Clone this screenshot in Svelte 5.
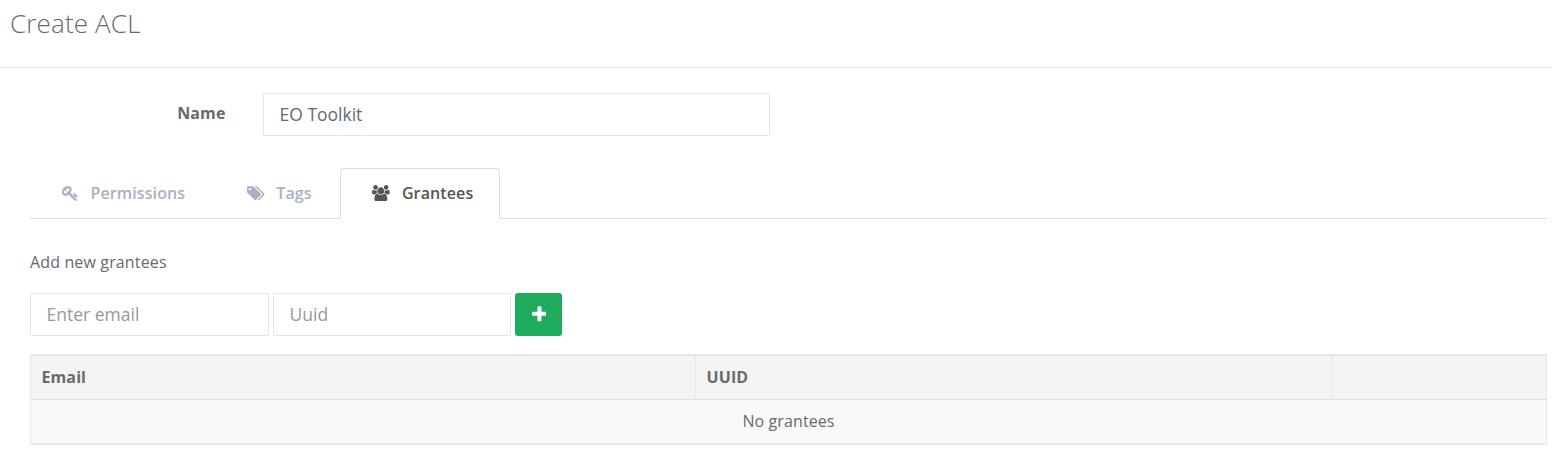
<script>
  const tabs = [
    { id: 'permissions', label: 'Permissions' },
    { id: 'tags', label: 'Tags' },
    { id: 'grantees', label: 'Grantees' }
  ];

  // Font Awesome 4 outlines, drawn on a flipped 1792 grid
  const icons = {
    permissions: { width: 1792, d: 'M832 1024q0 80 -56 136t-136 56t-136 -56t-56 -136q0 -42 19 -83q-41 19 -83 19q-80 0 -136 -56t-56 -136t56 -136t136 -56t136 56t56 136q0 42 -19 83q41 -19 83 -19q80 0 136 56t56 136zM1683 320q0 -17 -49 -66t-66 -49q-9 0 -28.500 16t-36.500 33t-38.500 40t-24.500 26l-96 -96l220 -220q28 -28 28 -68q0 -42 -39 -81t-81 -39q-40 0 -68 28l-671 671q-176 -131 -365 -131q-163 0 -265.500 102.500t-102.500 265.500q0 160 95 313t248 248t313 95q163 0 265.500 -102.500t102.500 -265.500q0 -189 -131 -365l355 -355l96 96q-3 3 -26 24.500t-40 38.500t-33 36.500t-16 28.500q0 17 49 66t66 49q13 0 23 -10q6 -6 46 -44.500t82 -79.500t86.500 -86t73 -78t28.500 -41z' },
    tags: { width: 1920, d: 'M448 1088q0 53 -37.500 90.500t-90.500 37.500t-90.500 -37.500t-37.500 -90.500t37.500 -90.500t90.500 -37.500t90.500 37.500t37.500 90.500zM1515 512q0 -53 -37 -90l-491 -492q-39 -37 -91 -37q-53 0 -90 37l-715 716q-38 37 -64.500 101t-26.500 117v416q0 52 38 90t90 38h416q53 0 117 -26.500t102 -64.500l715 -714q37 -39 37 -91zM1899 512q0 -53 -37 -90l-491 -492q-39 -37 -91 -37q-36 0 -59 14t-53 45l470 470q37 37 37 90q0 52 -37 91l-715 714q-38 38 -102 64.500t-117 26.500h224q53 0 117 -26.500t102 -64.500l715 -714q37 -39 37 -91z' },
    grantees: { width: 1920, d: 'M593 640q-162 -5 -265 -128h-134q-82 0 -138 40.500t-56 118.500q0 353 124 353q6 0 43.500 -21t97.500 -42.500t119 -21.500q67 0 133 23q-5 -37 -5 -66q0 -139 81 -256zM1664 3q0 -120 -73 -189.500t-194 -69.500h-874q-121 0 -194 69.500t-73 189.500q0 53 3.500 103.500t14 109t26.500 108.500t43 97.500t62 81t85.500 53.500t111.500 20q10 0 43 -21.500t73 -48t107 -48t135 -21.500t135 21.500t107 48t73 48t43 21.500q61 0 111.500 -20t85.500 -53.500t62 -81t43 -97.500t26.500 -108.500t14 -109t3.500 -103.500zM640 1280q0 -106 -75 -181t-181 -75t-181 75t-75 181t75 181t181 75t181 -75t75 -181zM1344 896q0 -159 -112.500 -271.500t-271.500 -112.500t-271.500 112.500t-112.500 271.500t112.500 271.500t271.500 112.500t271.500 -112.500t112.500 -271.500zM1920 671q0 -78 -56 -118.500t-138 -40.500h-134q-103 123 -265 128q81 117 81 256q0 29 -5 66q66 -23 133 -23q59 0 119 21.500t97.500 42.500t43.500 21q124 0 124 -353zM1792 1280q0 -106 -75 -181t-181 -75t-181 75t-75 181t75 181t181 75t181 -75t75 -181z' }
  };

  let activeTab = 'grantees';
  let name = 'EO Toolkit';
  let email = '';
  let uuid = '';
  let grantees = [];

  function addGrantee() {
    if (!email && !uuid) return;
    grantees = [...grantees, { email, uuid }];
    email = '';
    uuid = '';
  }
</script>

<header>
  <h1>Create ACL</h1>
</header>

<main>
  <div class="form-group">
    <label for="name">Name</label>
    <input id="name" class="name" type="text" bind:value={name} />
  </div>

  <ul class="tabs">
    {#each tabs as tab}
      <li>
        <button class="tab {tab.id}" class:active={activeTab === tab.id} on:click={() => (activeTab = tab.id)}>
          <svg viewBox="0 0 {icons[tab.id].width} 1792" aria-hidden="true">
            <path transform="translate(0 1536) scale(1 -1)" d={icons[tab.id].d} />
          </svg>
          <span>{tab.label}</span>
        </button>
      </li>
    {/each}
  </ul>

  {#if activeTab === 'grantees'}
    <p>Add new grantees</p>
    <div class="add-row">
      <input type="text" placeholder="Enter email" bind:value={email} />
      <input class="uuid" type="text" placeholder="Uuid" bind:value={uuid} />
      <button class="add" aria-label="Add grantee" on:click={addGrantee}>
        <svg viewBox="0 0 1408 1792" aria-hidden="true">
          <path transform="translate(0 1536) scale(1 -1)" d="M1408 800v-192q0 -40 -28 -68t-68 -28h-416v-416q0 -40 -28 -68t-68 -28h-192q-40 0 -68 28t-28 68v416h-416q-40 0 -68 28t-28 68v192q0 40 28 68t68 28h416v416q0 40 28 68t68 28h192q40 0 68 -28t28 -68v-416h416q40 0 68 -28t28 -68z" />
        </svg>
      </button>
    </div>

    <table>
      <thead>
        <tr>
          <th class="col-email">Email</th>
          <th class="col-uuid">UUID</th>
          <th></th>
        </tr>
      </thead>
      <tbody>
        {#each grantees as grantee}
          <tr>
            <td>{grantee.email}</td>
            <td>{grantee.uuid}</td>
            <td></td>
          </tr>
        {:else}
          <tr>
            <td class="empty" colspan="3">No grantees</td>
          </tr>
        {/each}
      </tbody>
    </table>
  {/if}
</main>

<style>
  :global(body) {
    background: #fff;
    color: #676a6c;
    font-family: "Open Sans", sans-serif;
    font-size: 16px;
    overflow: hidden;
  }

  header {
    box-sizing: border-box;
    height: 68px;
    padding: 5px 10px;
    border-bottom: 1px solid #e7eaec;
  }

  h1 {
    margin: 0;
    font-size: 26px;
    font-weight: 300;
    letter-spacing: 0.15px;
    line-height: 36px;
  }

  main {
    padding: 25px 5px 0 30px;
  }

  .form-group {
    display: flex;
    height: 43px;
    margin-bottom: 32px;
  }

  label {
    box-sizing: border-box;
    width: 233px;
    padding: 9px 37.5px 0 0;
    font-weight: 700;
    letter-spacing: 0.1px;
    line-height: 22px;
    text-align: right;
  }

  input {
    box-sizing: border-box;
    width: 239px;
    height: 43px;
    padding: 5px 15.5px 7px;
    border: 1px solid #e5e6e7;
    border-radius: 1px;
    outline: none;
    background: #fff;
    color: #676a6c;
    font: 17.5px "Open Sans", sans-serif;
  }

  input::placeholder {
    color: #999;
  }

  .name {
    width: 507px;
  }

  .uuid {
    width: 238px;
  }

  .tabs {
    display: flex;
    height: 50px;
    margin: 0;
    padding: 0;
    border-bottom: 1px solid #ddd;
    list-style: none;
  }

  .tab {
    box-sizing: border-box;
    display: flex;
    align-items: center;
    height: 51px;
    padding: 0 26px 2px 31.5px;
    border: 1px solid transparent;
    border-radius: 4px 4px 0 0;
    background: none;
    color: #a7b1c2;
    font: 600 16px "Open Sans", sans-serif;
    letter-spacing: 0.12px;
  }

  .tab svg {
    height: 16.5px;
    margin: 1px 12px 0 0;
  }

  .tab.permissions {
    padding: 0 28.5px 2px 31px;
  }

  .tab.permissions svg {
    stroke: currentColor;
    stroke-width: 50;
  }

  .tab.tags {
    padding-right: 27px;
  }

  .tab.tags svg {
    margin-right: 11.3px;
  }

  .tab.active {
    border-color: #ddd;
    border-bottom-color: #fff;
    background: #fff;
    color: #555;
  }

  svg {
    flex: none;
    fill: currentColor;
  }

  p {
    margin: 32px 0 20px;
    letter-spacing: 0.14px;
    line-height: 22px;
  }

  .add-row {
    display: flex;
    gap: 4px;
    margin-bottom: 18px;
  }

  .add {
    display: flex;
    align-items: center;
    justify-content: center;
    width: 47px;
    height: 43px;
    padding: 0 0 0 1px;
    border: 0;
    border-radius: 3px;
    background: #1fab5d;
    color: #fff;
  }

  .add svg {
    height: 19px;
  }

  table {
    width: 100%;
    border: solid #e7e7e7;
    border-width: 2px 1px;
    border-spacing: 0;
    table-layout: fixed;
  }

  th,
  td {
    box-sizing: border-box;
    height: 43px;
    padding: 0 10px 2px;
    letter-spacing: 0.1px;
    line-height: 22px;
    text-align: left;
  }

  th {
    height: 44px;
    padding-left: 10.5px;
    border-right: 1px solid #e7e7e7;
    border-bottom: 1px solid #ddd;
    background: #f4f4f4;
    font-weight: 700;
  }

  th:last-child {
    border-right: 0;
  }

  td {
    background: #f9f9f9;
  }

  .col-email {
    width: 665px;
  }

  .col-uuid {
    width: 637px;
  }

  .empty {
    text-align: center;
  }
</style>
